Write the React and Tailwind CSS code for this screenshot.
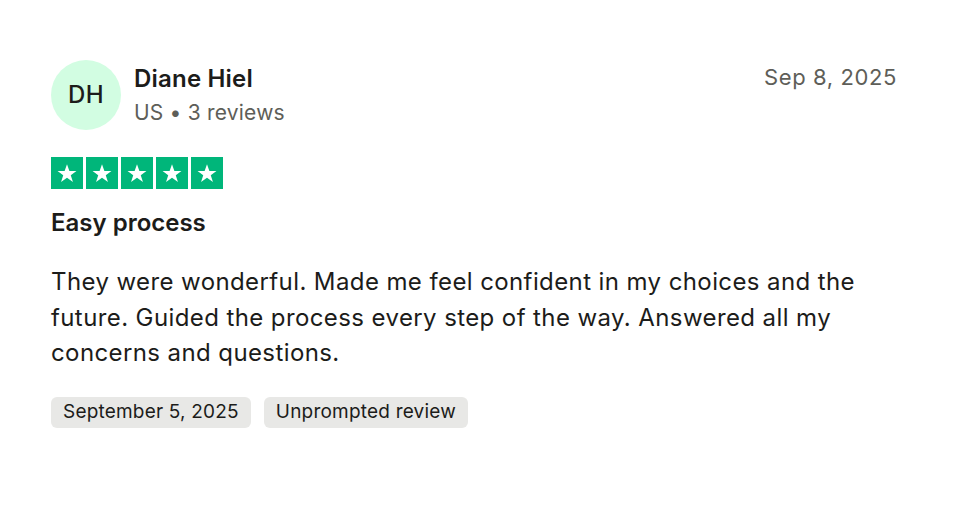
function Star() {
  return (
    <div className="flex h-[32px] w-[32px] items-center justify-center bg-[#00b67a]">
      <svg viewBox="0 0 24 24" className="h-[22px] w-[22px]" fill="white">
        <path d="M12 2.5l2.6 7.3h7.7l-6.2 4.6 2.4 7.4L12 17.2l-6.5 4.6 2.4-7.4-6.2-4.6h7.7z" />
      </svg>
    </div>
  );
}

export default function App() {
  return (
    <div className="min-h-[528px] w-[956px] bg-white font-['Inter',sans-serif] text-[#1c1c1a]">
      <div className="px-[51px] pt-[60px]">
        {/* Header */}
        <div className="flex items-start justify-between">
          <div className="flex items-center gap-[13px]">
            <div className="flex h-[70px] w-[70px] items-center justify-center rounded-full bg-[#d2fde2]">
              <span className="text-[24px] font-medium tracking-[0.3px] text-[#1c1c1a]">DH</span>
            </div>
            <div className="flex flex-col">
              <span className="text-[24px] font-semibold leading-[32px] tracking-[0.2px]">Diane Hiel</span>
              <span className="mt-[4px] text-[21px] leading-[28px] tracking-[0.2px] text-[#5e5e58]">
                US • 3 reviews
              </span>
            </div>
          </div>
          <span className="mr-[8px] mt-[1px] text-[22px] tracking-[0.6px] text-[#5e5e58]">Sep 8, 2025</span>
        </div>

        {/* Stars */}
        <div className="mt-[27px] flex gap-[3px]">
          <Star />
          <Star />
          <Star />
          <Star />
          <Star />
        </div>

        <h2 className="mt-[18px] text-[24px] font-semibold leading-[32px]">Easy process</h2>

        <p className="mt-[25px] max-w-[830px] text-[24px] leading-[35.5px] tracking-[0.4px]">
          They were wonderful. Made me feel confident in my choices and the future. Guided the
          process every step of the way. Answered all my concerns and questions.
        </p>

        <div className="mt-[26px] flex gap-[13px]">
          <span className="flex h-[31px] items-center rounded-[6px] bg-[#e8e8e6] px-[12px] text-[19px] tracking-[0.2px]">
            September 5, 2025
          </span>
          <span className="flex h-[31px] items-center rounded-[6px] bg-[#e8e8e6] px-[12px] text-[19px] tracking-[0.2px]">
            Unprompted review
          </span>
        </div>
      </div>
    </div>
  );
}
